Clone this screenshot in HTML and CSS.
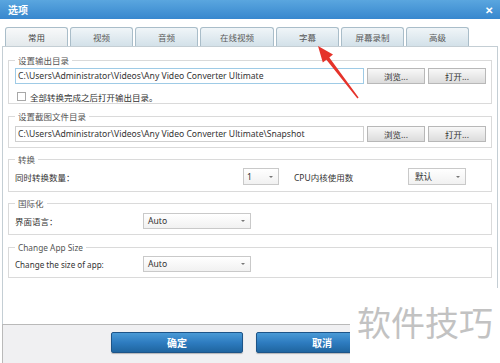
FILE: index.html
```html
<!DOCTYPE html>
<html>
<head>
<meta charset="utf-8">
<link rel="stylesheet" href="styles.css">
</head>
<body>
<div class="dialog">
  <div class="titlebar"><span class="title">选项</span><span class="close">✕</span></div>
  <div class="tabs">
    <div class="tab active">常用</div>
    <div class="tab">视频</div>
    <div class="tab">音频</div>
    <div class="tab wide">在线视频</div>
    <div class="tab">字幕</div>
    <div class="tab">屏幕录制</div>
    <div class="tab">高级</div>
  </div>
  <div class="panel">
    <fieldset class="group g1">
      <legend>设置输出目录</legend>
      <div class="row">
        <div class="input focus">C:\Users\Administrator\Videos\Any Video Converter Ultimate</div>
        <div class="btn">浏览...</div>
        <div class="btn">打开...</div>
      </div>
      <div class="check-row"><span class="checkbox"></span><span>全部转换完成之后打开输出目录。</span></div>
    </fieldset>
    <fieldset class="group g2">
      <legend>设置截图文件目录</legend>
      <div class="row">
        <div class="input">C:\Users\Administrator\Videos\Any Video Converter Ultimate\Snapshot</div>
        <div class="btn">浏览...</div>
        <div class="btn">打开...</div>
      </div>
    </fieldset>
    <fieldset class="group g3">
      <legend>转换</legend>
      <div class="row">
        <span class="label l1">同时转换数量：</span>
        <div class="select s-num"><span>1</span><span class="caret"></span></div>
        <span class="label l2">CPU内核使用数</span>
        <div class="select s-cpu"><span>默认</span><span class="caret"></span></div>
      </div>
    </fieldset>
    <fieldset class="group g4">
      <legend>国际化</legend>
      <div class="row">
        <span class="label l3">界面语言：</span>
        <div class="select s-auto"><span>Auto</span><span class="caret"></span></div>
      </div>
    </fieldset>
    <fieldset class="group g5">
      <legend class="latin">Change App Size</legend>
      <div class="row">
        <span class="label l3 latin">Change the size of app:</span>
        <div class="select s-auto"><span>Auto</span><span class="caret"></span></div>
      </div>
    </fieldset>
  </div>
  <div class="footer">
    <div class="pbtn">确定</div>
    <div class="pbtn">取消</div>
  </div>
  <div class="watermark">软件技巧</div>
  <svg class="arrow" viewBox="0 0 500 363" xmlns="http://www.w3.org/2000/svg">
    <polygon points="318,46 333,54.5 329.3,57.6 358.6,97.4 357.4,98.4 326.4,59.8 322.8,62.6" fill="#e5332b"/>
  </svg>
</div>
</body>
</html>
```

FILE: styles.css
```css
* { box-sizing: border-box; }
html, body { margin: 0; padding: 0; background: #fff; }
body {
  width: 500px; height: 363px; overflow: hidden;
  font-family: "Noto Sans", "Noto Sans CJK SC", sans-serif;
  font-size: 9px; color: #333;
}
.dialog {
  position: relative; width: 500px; height: 363px;
  display: flex; flex-direction: column; background: #fff;
}
.titlebar {
  flex: none; height: 19px;
  background: linear-gradient(#5aa6df, #3787ce);
  display: flex; align-items: center; justify-content: space-between;
  padding: 0 7px 0 8px; color: #fff;
}
.title { font-family: "Noto Sans CJK SC", sans-serif; font-size: 10px; font-weight: bold; }
.close { font-size: 10px; font-weight: bold; }
.tabs { flex: none; display: flex; gap: 2px; padding: 8px 0 0 5px; height: 27px; }
.tab {
  width: 63px; height: 19px;
  border: 1px solid #a9bdc9; border-bottom: none; border-radius: 3px 3px 0 0;
  background: linear-gradient(#f0f5f8, #d3e1e9);
  display: flex; align-items: center; justify-content: center;
  color: #5a5a5a; font-size: 8.5px; font-family: "Noto Sans CJK SC", sans-serif;
}
.tab.active { background: linear-gradient(#f8f9fa, #e3e9ec); color: #444; }
.tab.wide { width: 74px; }
.panel {
  flex: 1; margin: 0 2px; border: 1px solid #c4ced4; border-bottom: none;
  padding: 7px 5px 0 5px;
}
.group {
  margin: 0 0 5px 0; border: 1px solid #dadada;
  padding: 2px 5px 5px 6px; min-inline-size: 0;
}
.group legend {
  padding: 0 3px; line-height: 13px; color: #555; font-size: 8.5px;
}
.group legend.latin { font-size: 8.3px; }
.g1 { padding-top: 1px; padding-bottom: 0; }
.g2 { margin-top: 6px; padding-top: 3px; }
.g3 { padding-bottom: 6px; }
.g4 { margin-top: 4px; padding-top: 3px; }
.g5 { margin-top: 6px; }
.row { display: flex; align-items: center; gap: 3px; }
.input {
  flex: 1; height: 16px; border: 1px solid #cfcfcf; background: #fff;
  padding: 0 2px; line-height: 14px; white-space: nowrap; overflow: hidden; color: #333;
  font-size: 8.6px;
}
.input.focus { border-color: #9fcbe6; }
.btn {
  flex: none; width: 58px; height: 16px; border: 1px solid #b8b8b8;
  background: linear-gradient(#f8f8f8, #dcdcdc);
  display: flex; align-items: center; justify-content: center;
  font-size: 8.5px; color: #333;
}
.check-row { display: flex; align-items: center; height: 13px; margin-top: 6px; color: #333; font-size: 8.5px; }
.checkbox { width: 9px; height: 9px; border: 1px solid #a8a8a8; background: #fff; margin: 0 4px 0 2px; }
.label { flex: none; color: #333; font-size: 8.5px; white-space: nowrap; }
.label.latin { font-size: 8.1px; }
.l1 { width: 225px; }
.l2 { width: 111px; margin-left: 12px; }
.l3 { width: 125px; }
.select {
  flex: none; height: 17px; border: 1px solid #c9c9c9;
  background: linear-gradient(#fff, #f1f1f1);
  display: flex; align-items: center; justify-content: space-between;
  padding: 0 5px 0 4px; color: #333; font-size: 8.6px;
}
.g4 .select, .g5 .select { height: 16px; }
.s-num { width: 36px; padding-left: 3px; }
.s-cpu { width: 58px; padding-left: 6px; }
.s-auto { width: 108px; }
.caret {
  width: 0; height: 0;
  border-left: 2px solid transparent; border-right: 2px solid transparent;
  border-top: 2px solid #777;
}
.footer {
  flex: none; height: 39px; margin: 0 2px;
  background: #f0f0f2; border: 1px solid #b9b9b9; border-bottom: none;
  display: flex; gap: 13px; padding: 7px 0 0 108px;
}
.pbtn {
  width: 132px; height: 21px; border: 1px solid #1d5488; border-radius: 2px;
  background: linear-gradient(#4a9ad6, #2e7cc0 50%, #1f659f);
  box-shadow: 0 1px 1px rgba(0,0,0,0.25);
  display: flex; align-items: center; justify-content: center;
  color: #fff; font-weight: bold; font-size: 10px; font-family: "Noto Sans CJK SC", sans-serif;
}
.watermark {
  position: absolute; left: 350px; top: 288px; width: 150px; height: 75px;
  background: #fff; padding: 16px 0 0 7px;
  font-family: "Noto Sans CJK SC", sans-serif; font-size: 34px; line-height: 36px;
  color: #c2c2c2; white-space: nowrap;
}
.arrow { position: absolute; left: 0; top: 0; width: 500px; height: 363px; pointer-events: none; }
```
